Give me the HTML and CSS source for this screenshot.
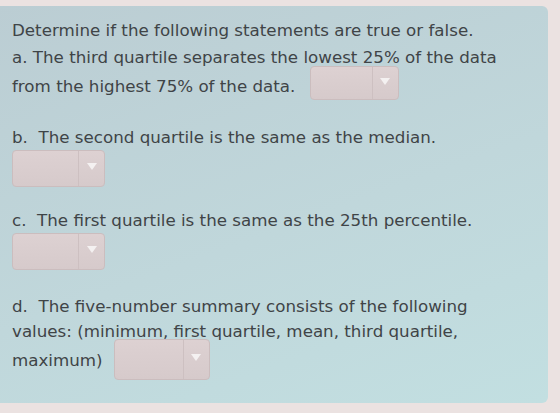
FILE: index.html
```html
<!DOCTYPE html>
<html lang="en">
<head>
  <meta charset="UTF-8">
  <meta name="viewport" content="width=device-width, initial-scale=1.0">
  <title>Quartiles - True or False</title>
  <link rel="stylesheet" href="styles.css">
</head>
<body>
  <div class="panel">
    <p class="intro">Determine if the following statements are true or false.</p>

    <div class="question question--a">
      <p>a. The third quartile separates the lowest 25% of the data from the highest 75% of the data. <span class="select select--small"><span class="select__arrow"></span></span></p>
    </div>

    <div class="question question--b">
      <p>b.&nbsp; The second quartile is the same as the median.</p>
      <span class="select select--block"><span class="select__arrow"></span></span>
    </div>

    <div class="question question--c">
      <p>c.&nbsp; The first quartile is the same as the 25th percentile.</p>
      <span class="select select--block"><span class="select__arrow"></span></span>
    </div>

    <div class="question question--d">
      <p>d.&nbsp; The five-number summary consists of the following values: (minimum, first quartile, mean, third quartile, maximum) <span class="select select--large"><span class="select__arrow"></span></span></p>
    </div>
  </div>
</body>
</html>
```

FILE: styles.css
```css
* {
  box-sizing: border-box;
  margin: 0;
  padding: 0;
}

body {
  font-family: "DejaVu Sans", Verdana, sans-serif;
  background-color: #ebe2e1;
  color: #3f4447;
  height: 413px;
  overflow: hidden;
  padding-top: 6px;
}

.panel {
  margin-left: -8px;
  width: 556px;
  height: 397px;
  background: linear-gradient(160deg, #bbcdd3 0%, #c0d7db 55%, #c2dfe1 100%);
  border-radius: 6px;
  padding: 12px 0 0 20px;
  font-size: 16.7px;
  line-height: 25px;
}

.intro {
  margin-bottom: 2px;
}

.question p {
  width: 505px;
}

.question--b {
  margin-top: 21px;
}

.question--c {
  margin-top: 21px;
}

.question--d {
  margin-top: 24px;
}

.select {
  display: inline-flex;
  justify-content: flex-end;
  align-items: stretch;
  width: 93px;
  height: 37px;
  background: linear-gradient(180deg, #ddd1d2 0%, #d6cacb 100%);
  border: 1px solid #cbbdbe;
  border-radius: 4px;
  vertical-align: middle;
}

.select--small {
  width: 89px;
  height: 34px;
  margin: -4px 0 4px 9px;
}

.select--large {
  width: 96px;
  height: 41px;
  margin: -5.5px 0 -0.5px 6px;
}

.select--block {
  display: flex;
}

.select__arrow {
  width: 26px;
  border-left: 1px solid #cdc0c1;
  display: flex;
  align-items: center;
  justify-content: center;
  padding-bottom: 4px;
}

.select__arrow::after {
  content: "";
  border-left: 5px solid transparent;
  border-right: 5px solid transparent;
  border-top: 7px solid #f4f1f1;
}
```
